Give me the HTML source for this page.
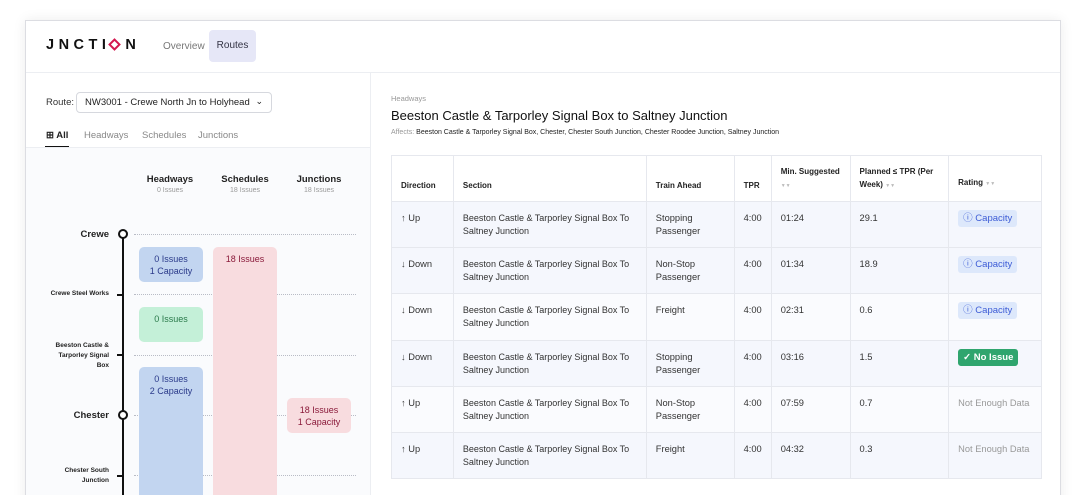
<!DOCTYPE html>
<html><head><meta charset="utf-8"><style>
*{box-sizing:border-box;margin:0;padding:0}
html,body{width:1080px;height:495px;overflow:hidden}
body{background:#fff;font-family:"Liberation Sans",sans-serif;color:#222;position:relative}
.a{position:absolute}
.card{left:25px;top:20px;width:1036px;height:490px;border:1px solid #dcdde2;box-shadow:0 0 12px rgba(0,0,0,.08);background:#fff}
.t9{font-size:9.5px}
.hd{font-weight:bold;font-size:8px;color:#222}
.dot{border-top:1px dotted #b9bcc6;height:0}
.blk{border-radius:5px;text-align:center;font-size:9px;padding-top:6px;line-height:12px}
table{border-collapse:collapse;font-size:9.3px;color:#333}
td,th{border:1px solid #e6e8ee;padding:0 9px;vertical-align:top;text-align:left}
th{font-size:8px;font-weight:bold;color:#222;vertical-align:middle;background:#fff;line-height:13px}
td{padding-top:10px;line-height:13px}
td.s{font-size:9px;padding-right:4px}
tr.o td{background:#f5f7fd}tr.e td{background:#fafbfe}
.cap{display:inline-block;background:#dde8fb;color:#3d5cd6;border-radius:3px;padding:2px 5px;font-size:9.5px}
.ok{display:inline-block;background:#2fa56e;color:#fff;border-radius:3px;padding:2px 5px;font-size:9.5px;font-weight:bold}
.na{color:#999}
.ar{color:#bbb;font-size:5px}
</style></head><body>
<div class="a card"></div>
<div class="a" style="left:46px;top:37px;font-size:14.5px;font-weight:bold;letter-spacing:4.5px;color:#111;line-height:16px">JNCTI<span style="display:inline-block;width:9px;height:9px;border:2.5px solid #d4174f;transform:rotate(45deg);margin:0 6px 0 0"></span>N</div>
<div class="a t9" style="left:163px;top:41px;color:#777;font-size:10px">Overview</div>
<div class="a" style="left:209px;top:30px;width:47px;height:32px;background:#e6e7f7;border-radius:4px;font-size:10px;color:#334;text-align:center;line-height:32px">Routes</div>
<div class="a" style="left:26px;top:72px;width:1034px;border-top:1px solid #eceef2"></div>
<div class="a" style="left:370px;top:73px;height:430px;border-left:1px solid #eceef2"></div>
<div class="a t9" style="left:46px;top:97px;color:#333">Route:</div>
<div class="a" style="left:76px;top:92px;width:196px;height:21px;border:1px solid #d6d8de;border-radius:4px;font-size:9.5px;line-height:19px;padding-left:8px;color:#222">NW3001 - Crewe North Jn to Holyhead<span style="position:absolute;right:8px;top:-1px;font-size:9px">&#8964;</span></div>
<div class="a" style="left:46px;top:130px;font-size:9.5px;font-weight:bold">&#8862; All</div>
<div class="a" style="left:45px;top:146px;width:24px;height:2px;background:#111"></div>
<div class="a t9" style="left:84px;top:130px;color:#888">Headways</div>
<div class="a t9" style="left:142px;top:130px;color:#888">Schedules</div>
<div class="a t9" style="left:198px;top:130px;color:#888">Junctions</div>
<div class="a" style="left:26px;top:147px;width:344px;height:360px;background:#fafbfd;border-top:1px solid #eceef2"></div>
<div class="a" style="left:140px;top:174px;width:60px;text-align:center"><div style="font-size:9.5px;font-weight:bold;line-height:12px">Headways</div><div style="font-size:7px;color:#999;margin-top:1px">0 Issues</div></div>
<div class="a" style="left:214px;top:174px;width:62px;text-align:center"><div style="font-size:9.5px;font-weight:bold;line-height:12px">Schedules</div><div style="font-size:7px;color:#999;margin-top:1px">18 Issues</div></div>
<div class="a" style="left:288px;top:174px;width:62px;text-align:center"><div style="font-size:9.5px;font-weight:bold;line-height:12px">Junctions</div><div style="font-size:7px;color:#999;margin-top:1px">18 Issues</div></div>
<div class="a dot" style="left:134px;top:234px;width:222px"></div>
<div class="a dot" style="left:134px;top:294px;width:222px"></div>
<div class="a dot" style="left:134px;top:355px;width:222px"></div>
<div class="a dot" style="left:134px;top:415px;width:222px"></div>
<div class="a dot" style="left:134px;top:475px;width:222px"></div>
<div class="a" style="left:122px;top:234px;width:2px;height:270px;background:#111"></div>
<div class="a" style="left:118px;top:229px;width:10px;height:10px;border:2px solid #111;border-radius:50%;background:#fff"></div>
<div class="a" style="left:118px;top:410px;width:10px;height:10px;border:2px solid #111;border-radius:50%;background:#fff"></div>
<div class="a" style="left:117px;top:294px;width:6px;height:2px;background:#111"></div>
<div class="a" style="left:117px;top:354px;width:6px;height:2px;background:#111"></div>
<div class="a" style="left:117px;top:475px;width:6px;height:2px;background:#111"></div>
<div class="a" style="left:60px;top:229px;width:49px;text-align:right;font-size:9.5px;font-weight:bold">Crewe</div>
<div class="a hd" style="left:30px;top:290px;width:79px;text-align:right;font-size:6.5px">Crewe Steel Works</div>
<div class="a hd" style="left:30px;top:341px;width:79px;text-align:right;font-size:6.5px;line-height:10px">Beeston Castle &amp;<br>Tarporley Signal<br>Box</div>
<div class="a" style="left:50px;top:410px;width:59px;text-align:right;font-size:9.5px;font-weight:bold">Chester</div>
<div class="a hd" style="left:30px;top:466px;width:79px;text-align:right;font-size:6.5px;line-height:10px">Chester South<br>Junction</div>
<div class="a blk" style="left:139px;top:247px;width:64px;height:35px;background:#c2d5f0;color:#2a3a8a">0 Issues<br>1 Capacity</div>
<div class="a blk" style="left:139px;top:307px;width:64px;height:35px;background:#c4f0d8;color:#2a7a4a">0 Issues</div>
<div class="a blk" style="left:139px;top:367px;width:64px;height:140px;background:#c2d5f0;color:#2a3a8a">0 Issues<br>2 Capacity</div>
<div class="a blk" style="left:213px;top:247px;width:64px;height:260px;background:#f8dcdf;color:#8a1a3a">18 Issues</div>
<div class="a blk" style="left:287px;top:398px;width:64px;height:35px;background:#f8dcdf;color:#8a1a3a">18 Issues<br>1 Capacity</div>
<div class="a" style="left:391px;top:94px;font-size:7.5px;color:#999">Headways</div>
<div class="a" style="left:391px;top:108px;font-size:13px;color:#111">Beeston Castle &amp; Tarporley Signal Box to Saltney Junction</div>
<div class="a" style="left:391px;top:129px;font-size:7px;color:#222"><span style="color:#999">Affects:</span> Beeston Castle &amp; Tarporley Signal Box, Chester, Chester South Junction, Chester Roodee Junction, Saltney Junction</div>
<table class="a" style="left:391px;top:155px;width:651px">
<colgroup><col style="width:62px"><col style="width:194px"><col style="width:88px"><col style="width:36px"><col style="width:79px"><col style="width:99px"><col style="width:93px"></colgroup>
<tr style="height:46px"><th style="padding-top:14px">Direction</th><th style="padding-top:14px">Section</th><th style="padding-top:14px">Train Ahead</th><th style="padding-top:14px">TPR</th><th>Min. Suggested<br><span class="ar">&#9660;&#9660;</span></th><th>Planned ≤ TPR (Per<br>Week) <span class="ar">&#9660;&#9660;</span></th><th style="padding-top:10px">Rating <span class="ar">&#9660;&#9660;</span></th></tr>
<tr class="o" style="height:46px"><td>↑ Up</td><td class="s">Beeston Castle &amp; Tarporley Signal Box To Saltney Junction</td><td>Stopping Passenger</td><td>4:00</td><td>01:24</td><td>29.1</td><td style="padding-top:8px"><span class="cap">ⓘ Capacity</span></td></tr>
<tr class="o" style="height:46px"><td>↓ Down</td><td class="s">Beeston Castle &amp; Tarporley Signal Box To Saltney Junction</td><td>Non-Stop Passenger</td><td>4:00</td><td>01:34</td><td>18.9</td><td style="padding-top:8px"><span class="cap">ⓘ Capacity</span></td></tr>
<tr class="e" style="height:47px"><td>↓ Down</td><td class="s">Beeston Castle &amp; Tarporley Signal Box To Saltney Junction</td><td>Freight</td><td>4:00</td><td>02:31</td><td>0.6</td><td style="padding-top:8px"><span class="cap">ⓘ Capacity</span></td></tr>
<tr class="o" style="height:46px"><td>↓ Down</td><td class="s">Beeston Castle &amp; Tarporley Signal Box To Saltney Junction</td><td>Stopping Passenger</td><td>4:00</td><td>03:16</td><td>1.5</td><td style="padding-top:8px"><span class="ok">✓ No Issue</span></td></tr>
<tr class="e" style="height:46px"><td>↑ Up</td><td class="s">Beeston Castle &amp; Tarporley Signal Box To Saltney Junction</td><td>Non-Stop Passenger</td><td>4:00</td><td>07:59</td><td>0.7</td><td class="na">Not Enough Data</td></tr>
<tr class="o" style="height:46px"><td>↑ Up</td><td class="s">Beeston Castle &amp; Tarporley Signal Box To Saltney Junction</td><td>Freight</td><td>4:00</td><td>04:32</td><td>0.3</td><td class="na">Not Enough Data</td></tr>
</table>
</body></html>
